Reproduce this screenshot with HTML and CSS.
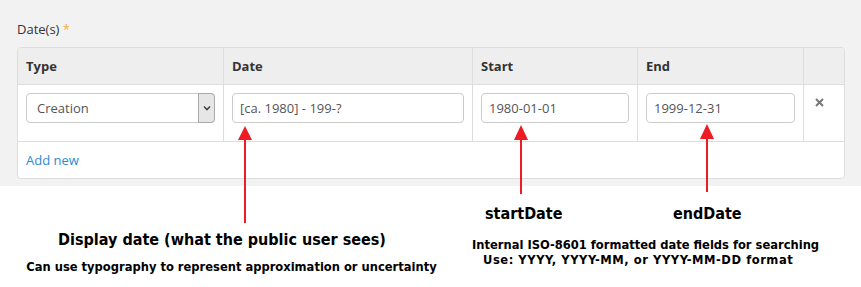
FILE: index.html
```html
<!DOCTYPE html>
<html lang="en">

<head>
    <meta charset="UTF-8">
    <title>Dates field</title>
    <link rel="stylesheet" href="styles.css">
</head>

<body>
    <div class="page">
        <div class="panel">
            <div class="field-label">Date(s) <span class="req">*</span></div>
            <div class="dates">
                <div class="dates-row head">
                    <div class="cell">Type</div>
                    <div class="cell">Date</div>
                    <div class="cell">Start</div>
                    <div class="cell">End</div>
                    <div class="cell"></div>
                </div>
                <div class="dates-row body">
                    <div class="cell">
                        <div class="select-wrap">
                            <select>
                                <option>Creation</option>
                            </select>
                            <span class="select-btn">
                                <svg width="8" height="6" viewBox="0 0 8 6"><path d="M1 1.5 L4 4.5 L7 1.5" fill="none" stroke="#444" stroke-width="1.6"/></svg>
                            </span>
                        </div>
                    </div>
                    <div class="cell"><input type="text" value="[ca. 1980] - 199-?"></div>
                    <div class="cell"><input type="text" value="1980-01-01"></div>
                    <div class="cell"><input type="text" value="1999-12-31"></div>
                    <div class="cell remove">
                        <svg width="9" height="9" viewBox="0 0 9 9"><path d="M1 1 L8 8 M8 1 L1 8" stroke="#777" stroke-width="2"/></svg>
                    </div>
                </div>
                <div class="add-row"><a href="#">Add new</a></div>
            </div>
        </div>

        <!-- annotation arrows -->
        <svg class="arrow arrow-display" width="16" height="98" viewBox="0 0 16 98"><path d="M8 0 L15 14 L1 14 Z" fill="#ed1c24"/><rect x="7" y="13" width="2" height="84" fill="#ed1c24"/></svg>
        <svg class="arrow arrow-start" width="16" height="70" viewBox="0 0 16 70"><path d="M8 0 L15 15 L1 15 Z" fill="#ed1c24"/><rect x="7" y="14" width="2" height="55" fill="#ed1c24"/></svg>
        <svg class="arrow arrow-end" width="16" height="69" viewBox="0 0 16 69"><path d="M8 0 L15 15 L1 15 Z" fill="#ed1c24"/><rect x="7" y="14" width="2" height="54" fill="#ed1c24"/></svg>

        <div class="note note-display">
            <div class="note-title">Display date (what the public user sees)</div>
            <div class="note-text">Can use typography to represent approximation or uncertainty</div>
        </div>
        <div class="note-title note-start">startDate</div>
        <div class="note-title note-end">endDate</div>
        <div class="note note-internal">
            <div class="note-text">Internal ISO-8601 formatted date fields for searching</div>
            <div class="note-text second">Use: YYYY, YYYY-MM, or YYYY-MM-DD format</div>
        </div>
    </div>
</body>

</html>
```

FILE: styles.css
```css
body {
    margin: 0;
    background-color: #ffffff;
    font-family: "Open Sans", sans-serif;
}

.page {
    position: relative;
    width: 861px;
    height: 287px;
    overflow: hidden;
}

.panel {
    height: 186px;
    box-sizing: border-box;
    padding: 20px 16px 0 17px;
    background-color: #f2f2f2;
}

.field-label {
    font-size: 13px;
    line-height: 18px;
    color: #333;
    margin-bottom: 9px;
}

.req {
    color: #f0ad4e;
}

.dates {
    width: 828px;
    box-sizing: border-box;
    border: 1px solid #dddddd;
    border-radius: 4px;
    background-color: #ffffff;
    overflow: hidden;
}

.dates-row {
    display: grid;
    grid-template-columns: 205px 249px 165px 166px 1fr;
    border-bottom: 1px solid #dddddd;
}

.cell {
    box-sizing: border-box;
    padding: 8px;
}

.cell + .cell {
    border-left: 1px solid #dddddd;
}

.head {
    background-color: #eeeeee;
}

.head .cell {
    height: 36px;
    display: flex;
    align-items: center;
    font-size: 13px;
    font-weight: bold;
    color: #333;
}

.body .cell {
    height: 56px;
}

input,
select {
    display: block;
    width: 100%;
    height: 30px;
    box-sizing: border-box;
    padding: 0 7px;
    border: 1px solid #cccccc;
    border-radius: 4px;
    background-color: #ffffff;
    font-family: "Open Sans", sans-serif;
    font-size: 13px;
    color: #555;
}

.select-wrap {
    position: relative;
}

select {
    appearance: none;
    padding-left: 10px;
}

.select-btn {
    position: absolute;
    top: 0;
    right: 0;
    bottom: 0;
    width: 17px;
    box-sizing: border-box;
    border: 1px solid #a9a9a9;
    border-radius: 0 4px 4px 0;
    background-color: #e6e6e6;
    display: flex;
    align-items: center;
    justify-content: center;
}

.remove {
    padding: 13px 0 0 11px;
}

.remove svg {
    display: block;
}

.add-row {
    height: 36px;
    display: flex;
    align-items: center;
    padding-left: 8px;
    font-size: 13px;
}

.add-row a {
    color: #2a8ad4;
    text-decoration: none;
}

.arrow {
    position: absolute;
    display: block;
}

.arrow-display {
    left: 237px;
    top: 126px;
}

.arrow-start {
    left: 513px;
    top: 125px;
}

.arrow-end {
    left: 699px;
    top: 124px;
}

.note {
    position: absolute;
    font-family: "DejaVu Sans Condensed", "DejaVu Sans", sans-serif;
    font-stretch: condensed;
    color: #000;
}

.note-title {
    font-family: "DejaVu Sans Condensed", "DejaVu Sans", sans-serif;
    font-stretch: condensed;
    font-weight: bold;
    font-size: 16px;
    line-height: 18px;
    color: #000;
}

.note-text {
    font-weight: bold;
    font-size: 12.8px;
    line-height: 15px;
}

.note-display {
    left: 17px;
    top: 231px;
    width: 429px;
    text-align: center;
}

.note-display .note-title {
    padding-right: 19px;
}

.note-display .note-text {
    margin-top: 10px;
}

.note-start {
    position: absolute;
    left: 485px;
    top: 205px;
}

.note-end {
    position: absolute;
    left: 673px;
    top: 205px;
}

.note-internal {
    left: 472px;
    top: 237px;
}

.note-internal .second {
    margin-left: 11px;
    letter-spacing: 0.55px;
}
```
